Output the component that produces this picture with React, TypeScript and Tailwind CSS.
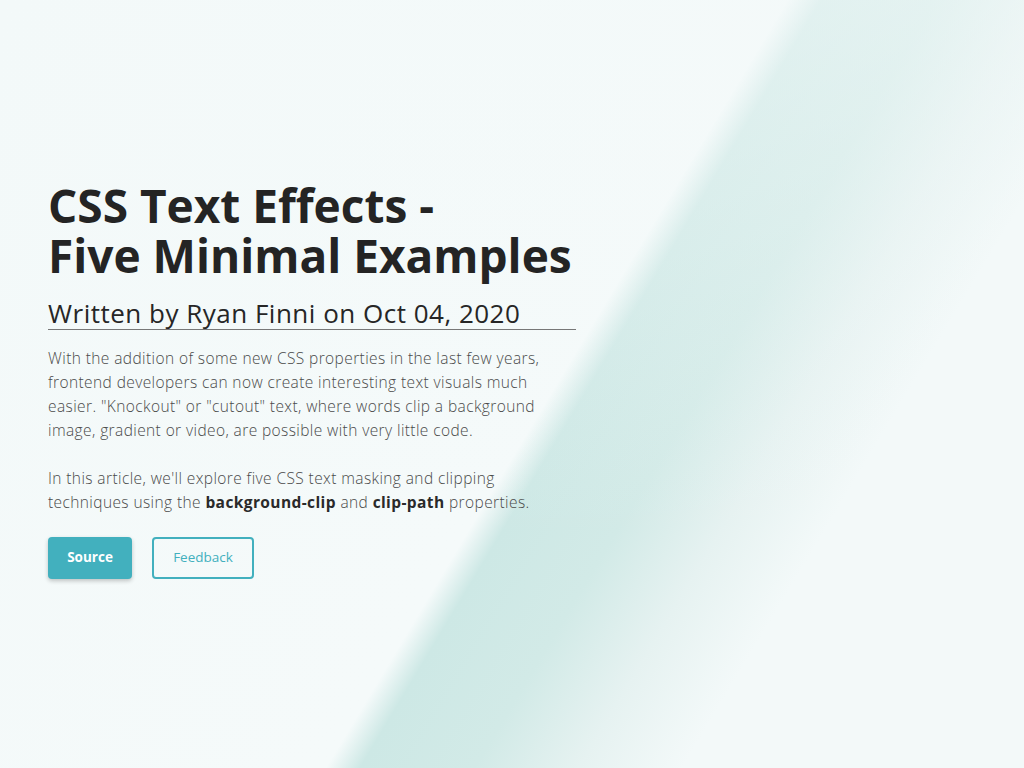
export default function App() {
  return (
    <main
      className="min-h-screen w-full flex items-center bg-[#f3f9f9] bg-[linear-gradient(180deg,rgba(243,249,249,0.55)_0%,rgba(243,249,249,0)_70%),linear-gradient(121deg,#f3f9f9_0%,#f5fafa_53%,#cde8e5_55.3%,#d2eae7_63%,#e6f2f1_70%,#f3f9f9_77%,#f3f9f9_100%)]"
      style={{ fontFamily: '"Open Sans", "Noto Sans", sans-serif' }}
    >
      <div className="w-[528px] ml-12 mb-[10px]">
        <h1 className="whitespace-nowrap text-[46px] leading-[50px] font-bold text-[#242424]">
          CSS Text Effects -<br />
          Five Minimal Examples
        </h1>

        <h2 className="mt-[17px] text-[26px] leading-[32px] font-medium text-[#262626] tracking-[0.5px] border-b border-[#777]">
          Written by Ryan Finni on Oct 04, 2020
        </h2>

        <div className="mt-[16px] w-[516px] text-[15.5px] leading-[24px] tracking-[0.4px] text-[#4a4a4a] font-light">
          <p>
            With the addition of some new CSS properties in the last few years,
            frontend developers can now create interesting text visuals much
            easier. "Knockout" or "cutout" text, where words clip a background
            image, gradient or video, are possible with very little code.
          </p>
          <p className="mt-6">
            In this article, we'll explore five CSS text masking and clipping
            techniques using the{" "}
            <strong className="font-bold text-[#2a2a2a]">background-clip</strong> and{" "}
            <strong className="font-bold text-[#2a2a2a]">clip-path</strong> properties.
          </p>
        </div>

        <div className="mt-[23px] flex gap-5">
          <a
            href="#"
            className="w-[84px] h-[42px] flex items-center justify-center rounded bg-[#42b0be] text-white text-[13.5px] font-bold shadow-[0_2px_4px_rgba(0,0,0,0.22)]"
          >
            Source
          </a>
          <a
            href="#"
            className="w-[102px] h-[42px] flex items-center justify-center rounded border-2 border-[#42b0be] text-[#42b0be] text-[13.5px] font-medium"
          >
            Feedback
          </a>
        </div>
      </div>
    </main>
  );
}
